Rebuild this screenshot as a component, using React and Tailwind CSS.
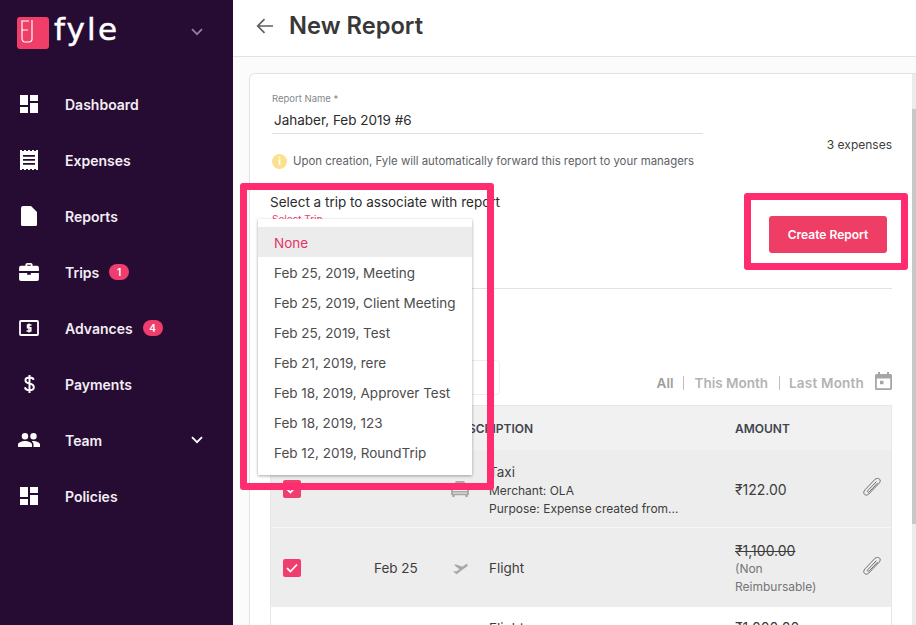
import React from "react";

const Grid = () => (
  <svg width="18" height="18" viewBox="0 0 18 18" fill="#fff"><path d="M0 0h8v10H0zM10 0h8v6h-8zM0 12h8v6H0zM10 8h8v10h-8z" /></svg>
);
const Receipt = () => (
  <svg width="18" height="20" viewBox="0 0 18 20" fill="#fff"><path d="M0 0h2v1H0zM4 0h2v1H4zM8 0h2v1H8zM12 0h2v1h-2zM16 0h2v1h-2z" /><path fillRule="evenodd" d="M0 1h18v18H0zM3 5v1.800h12V5zM3 9v1.800h12V9zM3 13v1.800h12V13z" /><path d="M0 19h2v1H0zM4 19h2v1H4zM8 19h2v1H8zM12 19h2v1h-2zM16 19h2v1h-2z" /></svg>
);
const Doc = () => (
  <svg width="16" height="20" viewBox="0 0 16 20" fill="#fff"><path d="M2 0h8l6 6v12.500a1.500 1.500 0 0 1-1.500 1.500h-13A1.500 1.500 0 0 1 0 18.500V2a2 2 0 0 1 2-2z" /></svg>
);
const Brief = () => (
  <svg width="20" height="18" viewBox="0 0 22 20" fill="#fff"><path fillRule="evenodd" d="M7 3V2a2 2 0 0 1 2-2h4a2 2 0 0 1 2 2v1h5a2 2 0 0 1 2 2v4H0V5a2 2 0 0 1 2-2zm2 0h4V2H9z" /><path d="M0 11h9v2h4v-2h9v7a2 2 0 0 1-2 2H2a2 2 0 0 1-2-2z" /></svg>
);
const Cash = () => (
  <svg width="20" height="16" viewBox="0 0 20 16" fill="none"><rect x="1" y="1" width="18" height="14" rx="0.800" stroke="#fff" strokeWidth="1.800" /><path d="M12.500 5H8.500V7.700H11.800V11H7.500M10 3.500V12.500" stroke="#fff" strokeWidth="1.500" /></svg>
);
const Dollar = () => (
  <svg width="11" height="18" viewBox="0 0 12 20" fill="none"><path d="M10.500 5.500C10.300 3.700 8.500 2.800 6 2.800S1.500 4 1.500 5.800C1.500 8 3.500 8.900 6 9.500s4.800 1.500 4.800 4c0 1.900-2 3.400-4.800 3.400S1.300 15.600 1 13.600M6 0v20" stroke="#fff" strokeWidth="2.200" /></svg>
);
const People = () => (
  <svg width="22" height="14" viewBox="0 0 22 14" fill="#fff"><circle cx="7" cy="3.200" r="3.200" /><circle cx="15.500" cy="3.200" r="3.200" /><path d="M0 14v-2.500C0 9.200 4.500 8 7 8s7 1.200 7 3.500V14zM15.500 14h6.500v-2.500C22 9.200 17.500 8 15.500 8c-.7 0-1.300.1-1.800.2 1.200.8 1.800 2 1.800 3.300z" /></svg>
);
const Chevron = ({ color = "#fff", w = 1.800 }) => (
  <svg width="12" height="8" viewBox="0 0 12 8" fill="none"><path d="M1 1.200l5 5 5-5" stroke={color} strokeWidth={w} /></svg>
);
const Clip = () => (
  <svg width="18" height="18" viewBox="0 0 18 18" fill="none" stroke="#707070" strokeWidth="1"><path d="M12 1.300L2 11.800C.4 13.500.4 15.300 1.500 16.400s2.900 1 4.300-.4L16 5.400c1.500-1.700 1.600-3.200.6-4.200S13.800 0 12 1.300zM13.400 3.600L5 12.400c-.7.700-.7 1.300-.3 1.700s1 .3 1.600-.3l8.400-8.800" /></svg>
);
const Check = () => (
  <div className="w-[18px] h-[18px] rounded-[2px] bg-[#ef3e6d] flex items-center justify-center">
    <svg width="12" height="10" viewBox="0 0 12 10" fill="none"><path d="M1 5.200l3.400 3.300L11 1.500" stroke="#fff" strokeWidth="1.800" /></svg>
  </div>
);

const nav = [
  ["Dashboard", <Grid />],
  ["Expenses", <Receipt />],
  ["Reports", <Doc />],
  ["Trips", <Brief />, "1"],
  ["Advances", <Cash />, "4"],
  ["Payments", <Dollar />],
  ["Team", <People />, null, true],
  ["Policies", <Grid />],
];

const trips = [
  "Feb 25, 2019, Meeting",
  "Feb 25, 2019, Client Meeting",
  "Feb 25, 2019, Test",
  "Feb 21, 2019, rere",
  "Feb 18, 2019, Approver Test",
  "Feb 18, 2019, 123",
  "Feb 12, 2019, RoundTrip",
];

export default function App() {
  return (
    <div className="relative flex w-[916px] h-[625px] overflow-hidden bg-white font-['Inter',sans-serif]">
      <aside className="w-[233px] shrink-0 bg-[#260b33]">
        <div className="h-[76px] flex items-start pt-[17px] pl-[17px] pr-[30px] justify-between">
          <div className="flex items-start gap-[5px]">
            <div className="w-[32px] h-[32px] rounded-[3px] bg-[#f03e68]">
              <svg width="32" height="32" viewBox="0 0 32 32" fill="none" stroke="#fff" strokeWidth="1.200"><path d="M12 4H5V21M5 13H11M15 3V22c0 2-1.500 3-3.500 3H8c-2 0-3-1.500-3-4" /></svg>
            </div>
            <span className="-mt-[3px] text-white text-[31px] leading-[30px] font-normal tracking-[2.2px] [-webkit-text-stroke:0.5px_#fff] font-['DejaVu_Sans',sans-serif]">fyle</span>
          </div>
          <div className="pt-[11px]"><Chevron color="#8d8196" /></div>
        </div>
        {nav.map(([label, icon, badge, chev]) => (
          <div key={label} className="h-14 flex items-center pl-[17px] pr-[30px]">
            <div className="w-[24px] flex justify-center">{icon}</div>
            <span className="ml-6 text-[14px] font-semibold text-[#f3eef5]">{label}</span>
            {badge && (
              <span className="ml-[10px] w-[20px] h-[16px] rounded-full bg-[#ef3e6d] text-white text-[10px] font-semibold flex items-center justify-center">{badge}</span>
            )}
            {chev && <div className="ml-auto"><Chevron /></div>}
          </div>
        ))}
      </aside>

      <main className="flex-1 min-w-0 flex flex-col">
        <header className="h-[57px] shrink-0 border-b border-[#e2e2e2] flex items-center pl-[23px] pb-[4px] bg-white">
          <svg width="18" height="16" viewBox="0 0 18 16" fill="none" stroke="#5f5f5f" strokeWidth="1.700"><path d="M17 8H2M8.500 1.200L1.700 8l6.800 6.800" /></svg>
          <h1 className="ml-[15px] text-[23.7px] font-semibold text-[#383838]">New Report</h1>
        </header>
        <div className="flex-1 min-h-0 bg-[#fbfbfb] pt-4 pl-4">
          <div className="h-full flex bg-white border-l border-t border-[#e2e2e2] rounded-tl-[6px]">
            <div className="ml-[22px] w-[620px] shrink-0 pt-[19px]">
              <div className="flex items-start">
                <div className="w-[431px]">
                  <div className="text-[9.5px] leading-[12px] text-[#86868c]">Report Name *</div>
                  <div className="mt-[5px] pl-[2px] pb-[3px] text-[13.5px] leading-[20px] text-[#2b2b2b] border-b border-[#dfdfdf]">Jahaber, Feb 2019 #6</div>
                  <div className="mt-[19px] flex items-center gap-[6px] whitespace-nowrap">
                    <div className="w-[15px] h-[15px] rounded-full bg-[#fbe08e] flex items-center justify-center text-white text-[10px] font-bold">i</div>
                    <span className="text-[11.4px] leading-[16px] text-[#5e6168]">Upon creation, Fyle will automatically forward this report to your managers</span>
                  </div>
                </div>
                <div className="ml-auto pt-[44px] text-[12px] leading-[16px] text-[#3d3d3d]">3 expenses</div>
              </div>
              <div className="mt-[24px] flex">
                <div>
                  <div className="-ml-[2px] text-[13.5px] leading-[18px] text-[#2b2b2b]">Select a trip to associate with report</div>
                  <div className="mt-[2px] text-[10px] leading-[12px] text-[#ef3e6d]">Select Trip</div>
                </div>
                <button className="ml-auto mr-[5px] mt-[23px] w-[118px] h-[37px] rounded-[3px] bg-[#ef3e66] text-white text-[12px] font-semibold">Create Report</button>
              </div>
              <div className="mt-[35px] border-t border-[#e2e2e2]" />
              <div className="mt-[71px] h-[35px] flex items-start justify-between">
                <div className="h-[35px] w-[228px] border border-[#eeeeee] rounded-[4px]" />
                <div className="mt-[11px] h-[24px] flex items-center text-[13.5px] font-semibold text-[#b3b3b3]">
                  <span className="text-[#9d9d9d]">All</span>
                  <span className="ml-[9px] mr-[11px] h-[14px] border-l border-[#bdbdbd]" />
                  <span>This Month</span>
                  <span className="ml-[11px] mr-[9px] h-[14px] border-l border-[#bdbdbd]" />
                  <span className="tracking-[0.2px]">Last Month</span>
                  <svg className="ml-[11px] mb-[4px]" width="17" height="18" viewBox="0 0 17 18" fill="#a6a6a6"><path fillRule="evenodd" d="M3 0h2v2h7V0h2v2h1.500A1.500 1.500 0 0 1 17 3.500v13a1.500 1.500 0 0 1-1.500 1.500h-14A1.500 1.500 0 0 1 0 16.500v-13A1.500 1.500 0 0 1 1.500 2H3zM1.800 6.500V16.200h13.400V6.500zM5 8.800h3.500v3.500H5z" /></svg>
                </div>
              </div>
              <div className="mt-[10px] -ml-[2px] border border-[#e6e6e6] border-b-0">
                <div className="h-[44px] pt-[2px] bg-[#f1f1f2] flex items-center text-[12px] font-semibold text-[#41454c]">
                  <span className="ml-[181px] w-[283px]">DESCRIPTION</span>
                  <span>AMOUNT</span>
                </div>
                <div className="h-[78px] bg-[#ededee] border-b border-[#f6f6f6] flex items-center">
                  <div className="ml-[12px] w-[168px]"><Check /></div>
                  <svg width="18" height="18" viewBox="0 0 18 18" fill="#a8a8a8" className="shrink-0"><path fillRule="evenodd" d="M3 7l1-4.500C4.200 1.600 5 1 6 1h6c1 0 1.800.6 2 1.500L15 7c1.500 0 3 .8 3 2v5c0 .8-.6 1.300-1.300 1.300V17h-2.400v-1.700H3.700V17H1.300v-1.700C.6 15.300 0 14.800 0 14V9c0-1.200 1.500-2 3-2zm2 0h8l-.6-3.500H5.600zM2 10h14v1H2zM2 12.500h14v1H2z" /></svg>
                  <div className="ml-[20px] w-[246px] pt-[3px] text-[#3d3d3d]">
                    <div className="mb-[1px] text-[13.5px] leading-[18px]">Taxi</div>
                    <div className="text-[12px] leading-[18px]">Merchant: OLA</div>
                    <div className="text-[12px] leading-[18px]">Purpose: Expense created from...</div>
                  </div>
                  <div className="w-[128px] pt-[2px] text-[14px] text-[#3d3d3d] leading-[20px]">₹122.00</div>
                  <div className="mb-[4px]"><Clip /></div>
                </div>
                <div className="h-[79px] bg-[#ededee] flex items-center">
                  <div className="ml-[12px] w-[91px]"><Check /></div>
                  <div className="w-[77px] pt-[2px] text-[13.5px] text-[#3d3d3d]">Feb 25</div>
                  <svg width="18" height="14" viewBox="0 0 23 18" fill="#a8a8a8" className="shrink-0"><g transform="rotate(-22 11 9)"><path d="M22 8.640c-.21-.8-1.040-1.280-1.840-1.060L14.920 9l-6.900-6.430-1.930.51 4.140 7.170-4.970 1.330-1.970-1.540-1.450.39 1.820 3.160.77 1.330 1.600-.43 5.310-1.420 4.350-1.160L21 10.490c.81-.23 1.280-1.050 1.070-1.850z" /></g></svg>
                  <div className="ml-[20px] w-[246px] pt-[2px] text-[13.5px] text-[#3d3d3d]">Flight</div>
                  <div className="w-[128px] pt-[2px]">
                    <div className="text-[14px] leading-[18px] text-[#3d3d3d] line-through">₹1,100.00</div>
                    <div className="w-[90px] text-[12px] leading-[18px] text-[#757575]">(Non Reimbursable)</div>
                  </div>
                  <div className="mb-[4px]"><Clip /></div>
                </div>
                <div className="h-[77px] bg-white flex pt-[12px]">
                  <div className="ml-[218px] w-[246px] text-[13.5px] leading-[18px] text-[#3d3d3d]">Flight</div>
                  <div className="text-[14px] leading-[18px] text-[#3d3d3d]">₹1,000.00</div>
                </div>
              </div>
            </div>
            <div className="ml-auto w-1 shrink-0 bg-[#ebebeb]">
              <div className="mt-[35px] h-[415px] bg-[#c8c8c8]" />
            </div>
          </div>
        </div>
      </main>

      <div className="absolute left-[258px] top-[219px] w-[214px] h-[256px] bg-white shadow-[0_1px_3px_rgba(0,0,0,0.35)] py-2">
        <div className="h-[30px] pt-[2px] bg-[#ececec] flex items-center pl-4 text-[13.5px] text-[#e5336a]">None</div>
        {trips.map((t) => (
          <div key={t} className="h-[30px] pt-[2px] flex items-center pl-4 text-[13.5px] text-[#4c4c4c]">{t}</div>
        ))}
      </div>
      <div className="absolute left-[240px] top-[183px] w-[254px] h-[307px] border-[7px] border-[#ff2d6f] rounded-[3px]" />
      <div className="absolute left-[744px] top-[193px] w-[164px] h-[77px] border-[7px] border-[#ff2d6f] rounded-[3px]" />
    </div>
  );
}
